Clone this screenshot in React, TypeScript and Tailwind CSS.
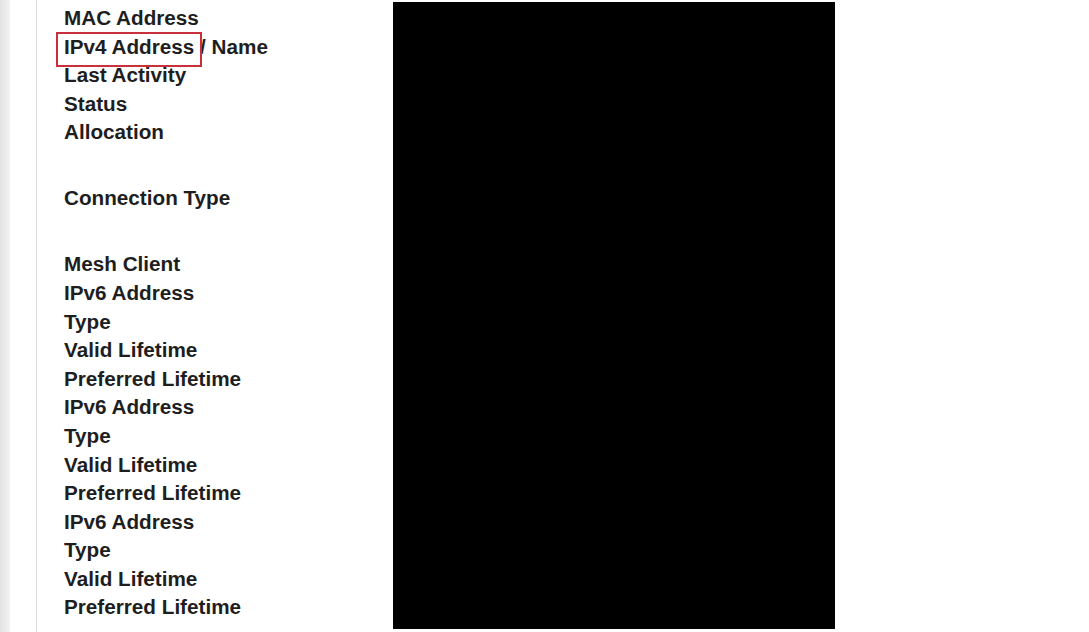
const groups: string[][] = [
  ["MAC Address", "IPv4 Address / Name", "Last Activity", "Status", "Allocation"],
  ["Connection Type"],
  [
    "Mesh Client",
    "IPv6 Address",
    "Type",
    "Valid Lifetime",
    "Preferred Lifetime",
    "IPv6 Address",
    "Type",
    "Valid Lifetime",
    "Preferred Lifetime",
    "IPv6 Address",
    "Type",
    "Valid Lifetime",
    "Preferred Lifetime",
  ],
]

function Label({ text }: { text: string }) {
  if (text.startsWith("IPv4")) {
    return (
      <div className="relative h-[28.6px]">
        <span>{text}</span>
        {/* highlight marker drawn over the label */}
        <div className="absolute left-[-8px] top-[-1px] h-[35px] w-[146px] border-[2.5px] border-[#c9303c]" />
      </div>
    )
  }
  return <div className="h-[28.6px]">{text}</div>
}

export default function App() {
  return (
    <div className="flex h-[632px] w-[1089px] overflow-hidden bg-white">
      <div className="w-[10px] shrink-0 bg-gradient-to-r from-[#e2e2e2] to-[#f3f3f3]" />
      <div className="w-[26px] shrink-0" />
      <div className="flex flex-1 border-l border-[#dcdcdc] pl-[27px]">
        <div
          className="w-[329px] shrink-0 pt-[4px] text-[20.7px] font-bold leading-[28.6px] text-[#1e1e1e]"
          style={{ fontFamily: '"Liberation Sans", Arial, sans-serif' }}
        >
          {groups.map((g, i) => (
            <div key={i} className={i > 0 ? "mt-[37.4px]" : ""}>
              {g.map((t, j) => (
                <Label key={j} text={t} />
              ))}
            </div>
          ))}
        </div>
        <div className="mt-[2px] h-[627px] w-[442px] shrink-0 bg-black" />
      </div>
    </div>
  )
}
